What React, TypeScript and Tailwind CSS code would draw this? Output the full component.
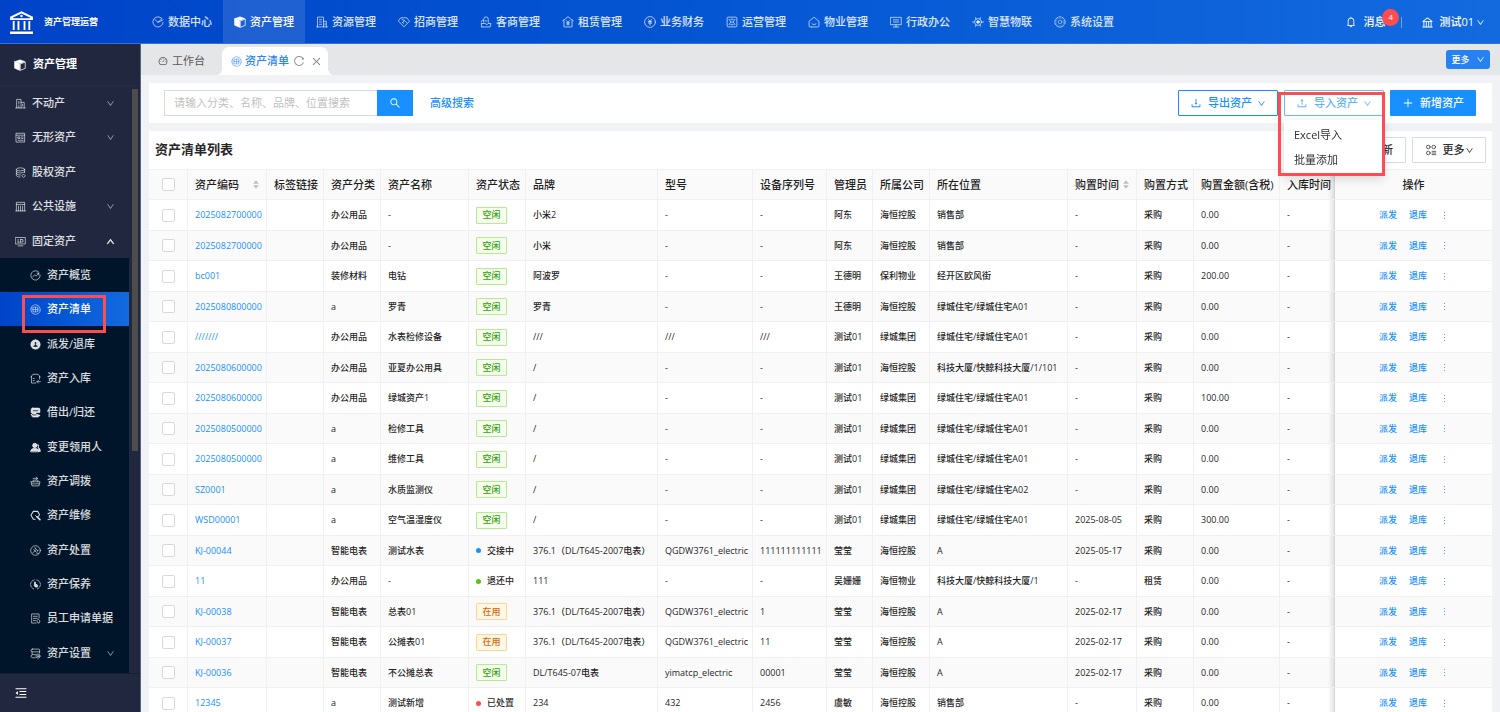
import type { ReactNode } from 'react';
import {
  AiFillCaretDown,
  AiFillCaretUp,
  AiOutlineBank,
  AiOutlineBell,
  AiOutlineClose,
  AiOutlineDashboard,
  AiOutlineDown,
  AiOutlineDownload,
  AiOutlineMenuFold,
  AiOutlinePlus,
  AiOutlineReload,
  AiOutlineSearch,
  AiOutlineUp,
  AiOutlineUpload,
} from 'react-icons/ai';

function Glyph({ children, className = 'size-[11px]' }: { children: ReactNode; className?: string }) {
  return (
    <svg
      viewBox="0 0 16 16"
      className={`${className} shrink-0`}
      fill="none"
      stroke="currentColor"
      strokeWidth="1"
      strokeLinecap="round"
      strokeLinejoin="round"
      aria-hidden="true"
    >
      {children}
    </svg>
  );
}

const cube = (
  <>
    <path d="M1 3.6 7.4 6.4V15L1 12.2Z" fill="currentColor" />
    <path d="M1.4 3.4 8 1l6.6 2.4L8 6Z" fill="currentColor" strokeWidth="0.6" />
    <path d="M8.8 6.6 15 4v8.4L8.8 15Z" />
  </>
);
const listBadge = (
  <>
    <circle cx="8" cy="8" r="7" strokeDasharray="9 1.5" strokeWidth="0.8" />
    <path d="M5 4.6h6v6.8H5zM8 4.6v6.8M5 8h6M3 6v4M13 6v4" strokeWidth="0.7" />
  </>
);
const building = <path d="M2 14.5V1.5h8v13M0.8 14.5h14.4M10 7h3.8v7.5M4.5 5h3M4.5 8h3M4.5 11h3M12 10v2" />;

const topNav: { label: string; icon: ReactNode }[] = [
  {
    label: '数据中心',
    icon: (
      <>
        <path d="M13 3.2A6.8 6.8 0 1 0 14.8 8.6" />
        <path d="M3.5 4.2 8 8.4l6.6-3M13.4 3.4 8 8.4" />
      </>
    ),
  },
  { label: '资产管理', icon: cube },
  { label: '资源管理', icon: building },
  {
    label: '招商管理',
    icon: (
      <>
        <path d="M4.2 2.4h7.6L15.3 7 8 14.4 0.7 7Z" />
        <path d="M6 8.6 8.6 6l3.2 3M5.4 4.6 8.6 6M6 8.6l1.6 1.2" />
      </>
    ),
  },
  {
    label: '客商管理',
    icon: (
      <>
        <path d="M5 8.4V4.2a3 3 0 0 1 6 0v4.2M2.4 14.6h11.2l1-4.6H10.6L9.4 11.6 7 10H1.6l0.8 4.6" />
        <path d="M4.4 5.6H3L1.8 8M6.8 6.6 9.2 6.6" />
      </>
    ),
  },
  {
    label: '租赁管理',
    icon: (
      <>
        <path d="M1 6.4 8 1l7 5.4M2.6 5.6v9h10.8v-9" />
        <path d="M6 6.2 8 8.4l2-2.2M8 8.4v4M6.2 9h3.6M6.2 10.8h3.6" />
      </>
    ),
  },
  {
    label: '业务财务',
    icon: (
      <>
        <circle cx="8" cy="8" r="7.2" />
        <path d="M5.8 4.6 8 7l2.2-2.4M8 7v5M5.8 7.4h4.4M5.8 9.4h4.4" />
      </>
    ),
  },
  {
    label: '运营管理',
    icon: (
      <>
        <path d="M1.5 5V3a1.5 1.5 0 0 1 1.5-1.5h2M11 1.5h2A1.5 1.5 0 0 1 14.5 3v2M14.5 11v2a1.5 1.5 0 0 1-1.5 1.5h-2M5 14.5H3A1.5 1.5 0 0 1 1.5 13v-2M1.5 6v4M14.5 6v4M6 1.5h4M6 14.5h4" />
        <path d="M4 4.4 6.4 8 4 11.6M12 4.4 9.6 8l2.4 3.6M6.4 4.4h3.2M6.4 11.6h3.2M8 7v2" />
      </>
    ),
  },
  { label: '物业管理', icon: <path d="M4.6 14.6H3A1.6 1.6 0 0 1 1.4 13V7L8 1.6 14.6 7v6a1.6 1.6 0 0 1-1.6 1.6H4.6M5.4 10.4c1.6 1.4 3.6 1.4 5.2 0" /> },
  { label: '行政办公', icon: <path d="M1 1.8h14v9.8H1zM8 11.6v3M4.4 14.6h7.2M4.6 5.2h6.8M4.6 8h6.8" /> },
  {
    label: '智慧物联',
    icon: (
      <>
        <circle cx="8" cy="8" r="4.6" />
        <circle cx="8" cy="8" r="1.8" fill="currentColor" />
        <path d="M0.6 8h2.2M13.2 8h2.2M4.6 2l0.8 1.8M11.4 2l-0.8 1.8M4.6 14l0.8-1.8M11.4 14l-0.8-1.8" />
      </>
    ),
  },
  {
    label: '系统设置',
    icon: (
      <>
        <circle cx="8" cy="8" r="6.9" strokeDasharray="2.6 1.7" />
        <circle cx="8" cy="8" r="5.4" strokeWidth="0.4" />
        <circle cx="8" cy="8" r="2.4" strokeWidth="0.7" />
      </>
    ),
  },
];

const sideMenu: { label: string; icon: ReactNode; arrow?: 'up' | 'down' }[] = [
  { label: '不动产', arrow: 'down', icon: <path d="M2.4 14.4V2h6.4v12.4M1 14.4h14M8.8 6.4h4.6v8M5.6 5v3.6M5.6 11v3.4M11 9.4v2" /> },
  { label: '无形资产', arrow: 'down', icon: <path d="M2 1.8h12v12.8H2zM2 4.6h12M4.6 7.2h2.6v2.2H4.6zM9.4 7.2h2.4M9.4 9.4h2.4M4.6 12h7.2" /> },
  {
    label: '股权资产',
    icon: (
      <>
        <ellipse cx="8" cy="3.4" rx="6" ry="2.2" />
        <path d="M2 3.4v9c0 1.2 2.4 2.2 5.4 2.2M14 3.4v5M2 6.4c0 1.2 2.7 2.2 6 2.2s6-1 6-2.2M2 9.4c0 1.2 2.6 2.2 5.6 2.2M12 10.6l-2 2.2 2 2M13 15l2-2.2-2-2" />
      </>
    ),
  },
  { label: '公共设施', arrow: 'down', icon: <path d="M2 14.4V2h12v12.4M1 14.4h14M2 5h12M5 7.4v7M8 7.4v7M11 7.4v7" /> },
  { label: '固定资产', arrow: 'up', icon: <path d="M1 2.2h14v9.4H1zM4.6 14.4h6.8M4.4 5v4M4.4 9h2M8 5v4M8 5.2h3.6v3.6H8" /> },
];

const subMenu: { label: string; icon: ReactNode; arrow?: boolean }[] = [
  {
    label: '资产概览',
    icon: (
      <>
        <path d="M13 3.2A6.8 6.8 0 1 0 14.8 7.4" />
        <path d="M4 9.8 7 7l2 1.8 3.8-4M10.2 4.6h2.6v2.6" />
      </>
    ),
  },
  { label: '资产清单', icon: listBadge },
  {
    label: '派发/退库',
    icon: (
      <path
        d="M8 1a7 7 0 1 0 0 14A7 7 0 0 0 8 1ZM8 3.8l2 2.6H9v2.4l2.4 1.4v1.6H4.6v-1.6L7 8.8V6.4H6Z"
        fill="currentColor"
        fillRule="evenodd"
        strokeWidth="0.6"
      />
    ),
  },
  { label: '资产入库', icon: <path d="M1 6 4.4 1.8h7.2L15 6M2.2 5v9.6h6.4M13.8 5v3.6M4.6 8h1.6M4.6 11h1.6M15 12.6h-4.6M12.2 10.6l-2 2 2 2" /> },
  {
    label: '借出/归还',
    icon: (
      <>
        <path d="M4 1.6h8.4A2 2 0 0 1 14.4 3.6V8H8.6v2.4h-4L1.6 8V4A2.4 2.4 0 0 1 4 1.6ZM1.8 10.6 5 12.6h4.4v-2L14.6 12 12 14.6H4Z" fill="currentColor" />
        <path d="M5 5.4h6" stroke="#001529" />
      </>
    ),
  },
  {
    label: '变更领用人',
    icon: (
      <>
        <circle cx="7" cy="5" r="3.2" fill="currentColor" />
        <path d="M1 13.8c0-3 2.4-4.6 6-4.6s5.6 1.6 5.6 4.6ZM11.2 3.4a2.4 2.4 0 0 1 0 4.4c2.4 0.4 3.8 2 3.8 6h-2.4" fill="currentColor" />
      </>
    ),
  },
  { label: '资产调拨', icon: <path d="M1.4 8.4 3 14.4h10l1.6-6H1.4M4.6 8.4V6M11.4 8.4V6M4.6 3.4h6M9 1.6l2 1.8-2 1.8M2.6 11.4h10.8M6 6h4" /> },
  {
    label: '资产维修',
    icon: (
      <>
        <path d="M7.4 13.4H4.8L1.4 7.6 4.8 2h6.4l2.6 4.6L12.6 9" strokeWidth="1.5" />
        <path d="M10.4 10 14.4 14" strokeWidth="2.4" />
        <path d="M8.4 8.4 10.4 10.4" strokeWidth="1.4" />
      </>
    ),
  },
  {
    label: '资产处置',
    icon: (
      <>
        <circle cx="8" cy="8" r="7" />
        <path d="M4 11.6 8.6 7M7 4.4l4.4 4.2M5.4 6.8l3.4 3.4M8.6 4 7 5.4M12 7.6l-1.8 1.6M9.6 12H12" />
      </>
    ),
  },
  {
    label: '资产保养',
    icon: (
      <>
        <path d="M6 1.4A6.8 6.8 0 0 0 6 14.6M10 1.4a6.8 6.8 0 0 1 0 13.2" strokeDasharray="3 1.6" />
        <path d="M6.4 5v5l1.4 1.8h3V8.6L8 7.4V5Z" fill="currentColor" />
      </>
    ),
  },
  { label: '员工申请单据', icon: <path d="M9 14.6H2.4V1.4h10.8v6M5 4.8h5.6M5 7.8h5.6M5 10.8h3M12.4 9.4l2.2 2.2-1.2 3h-2l-1.2-3Z" /> },
  {
    label: '资产设置',
    arrow: true,
    icon: (
      <>
        <path d="M3.4 1.6h9.2a1.4 1.4 0 0 1 1.4 1.4v2.6H3.4a2 2 0 0 1 0-4ZM14 5.6v2M3 5.6v4h5M3 9.6a2.4 2.4 0 0 0 1 4.6h3.4" />
        <circle cx="11.6" cy="11.8" r="3" />
        <circle cx="11.6" cy="11.8" r="0.8" />
      </>
    ),
  },
];

type Row = {
  code: string;
  kind: string;
  name: string;
  state: string;
  brand: string;
  model: string;
  serial: string;
  admin: string;
  company: string;
  place: string;
  date: string;
  way: string;
  price: string;
};

const r = (
  code: string, kind: string, name: string, state: string, brand: string, model: string, serial: string,
  admin: string, company: string, place: string, date: string, way: string, price: string,
): Row => ({ code, kind, name, state, brand, model, serial, admin, company, place, date, way, price });

const rows: Row[] = [
  r('2025082700000', '办公用品', '-', '空闲', '小米2', '-', '-', '阿东', '海恒控股', '销售部', '-', '采购', '0.00'),
  r('2025082700000', '办公用品', '-', '空闲', '小米', '-', '-', '阿东', '海恒控股', '销售部', '-', '采购', '0.00'),
  r('bc001', '装修材料', '电钻', '空闲', '阿波罗', '-', '-', '王德明', '保利物业', '经开区欧风街', '-', '采购', '200.00'),
  r('2025080800000', 'a', '罗青', '空闲', '罗青', '-', '-', '王德明', '海恒控股', '绿城住宅/绿城住宅A01', '-', '采购', '0.00'),
  r('///////', '办公用品', '水表检修设备', '空闲', '///', '///', '///', '测试01', '绿城集团', '绿城住宅/绿城住宅A01', '-', '采购', '0.00'),
  r('2025080600000', '办公用品', '亚夏办公用具', '空闲', '/', '-', '-', '测试01', '海恒控股', '科技大厦/快鲸科技大厦/1/101', '-', '采购', '0.00'),
  r('2025080600000', '办公用品', '绿城资产1', '空闲', '/', '-', '-', '测试01', '绿城集团', '绿城住宅/绿城住宅A01', '-', '采购', '100.00'),
  r('2025080500000', 'a', '检修工具', '空闲', '/', '-', '-', '测试01', '绿城集团', '绿城住宅/绿城住宅A01', '-', '采购', '0.00'),
  r('2025080500000', 'a', '维修工具', '空闲', '/', '-', '-', '测试01', '绿城集团', '绿城住宅/绿城住宅A01', '-', '采购', '0.00'),
  r('SZ0001', 'a', '水质监测仪', '空闲', '/', '-', '-', '测试01', '绿城集团', '绿城住宅/绿城住宅A02', '-', '采购', '0.00'),
  r('WSD00001', 'a', '空气温湿度仪', '空闲', '/', '-', '-', '测试01', '绿城集团', '绿城住宅/绿城住宅A01', '2025-08-05', '采购', '300.00'),
  r('KJ-00044', '智能电表', '测试水表', '交接中', '376.1（DL/T645-2007电表）', 'QGDW3761_electric', '111111111111', '莹莹', '海恒控股', 'A', '2025-05-17', '采购', '0.00'),
  r('11', '办公用品', '-', '退还中', '111', '-', '-', '吴姗姗', '海恒物业', '科技大厦/快鲸科技大厦/1', '-', '租赁', '0.00'),
  r('KJ-00038', '智能电表', '总表01', '在用', '376.1（DL/T645-2007电表）', 'QGDW3761_electric', '1', '莹莹', '海恒控股', 'A', '2025-02-17', '采购', '0.00'),
  r('KJ-00037', '智能电表', '公摊表01', '在用', '376.1（DL/T645-2007电表）', 'QGDW3761_electric', '11', '莹莹', '海恒控股', 'A', '2025-02-17', '采购', '0.00'),
  r('KJ-00036', '智能电表', '不公摊总表', '空闲', 'DL/T645-07电表', 'yimatcp_electric', '00001', '莹莹', '海恒控股', 'A', '2025-02-17', '采购', '0.00'),
  r('12345', 'a', '测试新增', '已处置', '234', '432', '2456', '虞敏', '海恒控股', '销售部', '-', '采购', '0.00'),
];

const columns: { label: string; width: string; sort?: boolean }[] = [
  { label: '资产编码', width: 'w-[79px]', sort: true },
  { label: '标签链接', width: 'w-[57px]' },
  { label: '资产分类', width: 'w-[57px]' },
  { label: '资产名称', width: 'w-[88px]' },
  { label: '资产状态', width: 'w-[57px]' },
  { label: '品牌', width: 'w-[132px]' },
  { label: '型号', width: 'w-[95px]' },
  { label: '设备序列号', width: 'w-[74px]' },
  { label: '管理员', width: 'w-[46px]' },
  { label: '所属公司', width: 'w-[57px]' },
  { label: '所在位置', width: 'w-[138px]' },
  { label: '购置时间', width: 'w-[69px]', sort: true },
  { label: '购置方式', width: 'w-[57px]' },
  { label: '购置金额(含税)', width: 'w-[86px]' },
  { label: '入库时间', width: 'w-[55px]' },
];

function Sorter() {
  return (
    <span className="flex flex-col text-[8px] text-[#bfbfbf]">
      <AiFillCaretUp className="-mb-[3px]" />
      <AiFillCaretDown />
    </span>
  );
}

const dotColors: Record<string, string> = {
  交接中: 'bg-[#1890ff]',
  退还中: 'bg-[#52c41a]',
  已处置: 'bg-[#ff4d4f]',
};

function State({ value }: { value: string }) {
  if (value in dotColors) {
    return (
      <span className="flex items-center gap-[6px]">
        <span className={`size-[5px] shrink-0 rounded-full ${dotColors[value]}`} />
        {value}
      </span>
    );
  }
  const tone =
    value === '空闲' ? 'border-[#b7eb8f] bg-[#f6ffed] text-[#389e0d]' : 'border-[#ffd591] bg-[#fff7e6] text-[#d46b08]';
  return (
    <span className={`inline-flex h-[17px] w-[31px] items-center justify-center rounded-[1px] border font-medium ${tone}`}>
      {value}
    </span>
  );
}

const fixedCell =
  "sticky right-0 after:absolute after:inset-y-0 after:right-full after:w-[7px] after:bg-linear-to-l after:from-black/12 after:to-transparent after:content-['']";

const box =
  'block size-[13px] appearance-none rounded-[2px] border border-[#d9d9d9] bg-white checked:border-[#1890ff] checked:bg-[#1890ff]';

function AssetTable() {
  return (
    <table className="w-full min-w-[1343px] table-fixed border-separate border-spacing-0 text-left text-[9px] leading-[14px] text-[#1f1f1f]">
      <colgroup>
        <col className="w-[39px]" />
        {columns.map((c) => (
          <col key={c.label} className={c.width} />
        ))}
        <col className="w-[157px]" />
      </colgroup>
      <thead className="text-[11px]">
        <tr className="h-[31px]">
          <th className="border-t border-r border-b border-[#f0f0f0] bg-[#fafafa] p-0 pl-[13px]">
            <input type="checkbox" aria-label="全选" className={box} />
          </th>
          {columns.map((c) => (
            <th
              key={c.label}
              className="overflow-hidden border-t border-r border-b border-[#f0f0f0] bg-[#fafafa] p-0 pl-[7px] font-medium whitespace-nowrap"
            >
              {c.sort ? (
                <span className="flex items-center justify-between pr-[6px]">
                  {c.label}
                  <Sorter />
                </span>
              ) : (
                c.label
              )}
            </th>
          ))}
          <th className={`border-t border-b border-[#f0f0f0] bg-[#fafafa] p-0 text-center font-medium ${fixedCell}`}>操作</th>
        </tr>
      </thead>
      <tbody className="font-medium">
        {rows.map((row, i) => (
          <tr
            key={i}
            className="h-[31px] bg-white even:h-[30px] even:bg-[#fafafa] [&>td]:overflow-hidden [&>td]:border-r [&>td]:border-b [&>td]:border-[#f0f0f0] [&>td]:bg-inherit [&>td]:p-0 [&>td]:pl-[7px] [&>td]:whitespace-nowrap"
          >
            <td>
              <input type="checkbox" aria-label={`选择 ${row.code}`} className={`${box} ml-[6px]`} />
            </td>
            <td className="font-normal text-[#1890ff]">
              <a href="#asset">{row.code}</a>
            </td>
            <td />
            <td>{row.kind}</td>
            <td>{row.name}</td>
            <td>
              <State value={row.state} />
            </td>
            <td>{row.brand}</td>
            <td className="font-normal">{row.model}</td>
            <td className="font-normal">{row.serial}</td>
            <td>{row.admin}</td>
            <td>{row.company}</td>
            <td>{row.place}</td>
            <td className="font-normal">{row.date}</td>
            <td>{row.way}</td>
            <td className="font-normal">{row.price}</td>
            <td className="font-normal">-</td>
            <td className={`overflow-visible! border-r-0! ${fixedCell}`}>
              <span className="flex items-center justify-center gap-[12px] pr-[9px] text-[#1890ff]">
                <button type="button">派发</button>
                <button type="button">退库</button>
                <button type="button" aria-label="更多操作">
                  <svg viewBox="0 0 3 9" className="ml-[4px] h-[9px] w-[3px]" fill="#4da3ff" aria-hidden="true">
                    <rect x="1" y="1" width="1" height="1" />
                    <rect x="1" y="4" width="1" height="1" />
                    <rect x="1" y="7" width="1" height="1" />
                  </svg>
                </button>
              </span>
            </td>
          </tr>
        ))}
      </tbody>
    </table>
  );
}

function Header() {
  return (
    <header className="flex h-[44px] shrink-0 items-stretch border-b border-[#2c74e6] bg-linear-to-r from-[#0043c8] to-[#136adf] pt-px text-[11px] text-white">
      <div className="flex w-[141px] shrink-0 items-center gap-[10px] pl-[9px]">
        <svg viewBox="0 0 24 24" className="size-[25px]" fill="currentColor" aria-hidden="true">
          <path
            d="M12 1.2 23 6.4V9.6H1V6.4ZM12 3.4 4 7.2v0.6h16V7.2ZM12 4.6a1.2 1.2 0 1 1 0 2.4 1.2 1.2 0 0 1 0-2.4Z"
            fillRule="evenodd"
          />
          <path d="M3.6 10.6h1.8v8.6H3.6zM8.2 10.6H10v8.6H8.2zM14 10.6h1.8v8.6H14zM18.6 10.6h1.8v8.6h-1.8zM1 20.6h22v2.4H1z" />
        </svg>
        <h1 className="text-[9px] font-bold">资产管理运营</h1>
      </div>
      <nav className="-mt-px flex min-w-0 flex-1 overflow-hidden">
        {topNav.map((item, i) => (
          <a
            key={item.label}
            href="#nav"
            className={
              i === 1
                ? 'flex w-[82px] shrink-0 items-center justify-center gap-[4px] bg-white/12 pt-px font-medium whitespace-nowrap'
                : 'flex w-[82px] shrink-0 items-center justify-center gap-[4px] pt-px font-medium whitespace-nowrap text-white/85'
            }
          >
            <Glyph className="size-[12px]">{item.icon}</Glyph>
            {item.label}
          </a>
        ))}
      </nav>
      <div className="flex shrink-0 items-center pr-[15px]">
        <a href="#message" className="relative flex items-center gap-[6px] font-medium">
          <AiOutlineBell className="size-[12px]" />
          消息
          <span className="absolute -top-[5px] -right-[14px] flex size-[17px] items-center justify-center rounded-full bg-[#ff4d4f] text-[8px] leading-none font-normal">
            4
          </span>
        </a>
        <span className="ml-[16px] h-[11px] w-px bg-white/40" />
        <button type="button" className="ml-[19px] flex items-center gap-[5px] font-medium">
          <AiOutlineBank className="size-[13px]" />
          测试01
          <AiOutlineDown className="-ml-[3px] size-[9px]" />
        </button>
      </div>
    </header>
  );
}

function Sidebar() {
  return (
    <aside className="flex w-[141px] shrink-0 flex-col border-r border-[#59637f] bg-[#20273f] text-[11px] text-white">
      <div className="flex h-[42px] shrink-0 items-center gap-[7px] border-b border-[#2a2c38] pl-[14px] font-bold">
        <Glyph className="size-[12px]">{cube}</Glyph>
        资产管理
      </div>
      <div className="flex min-h-0 flex-1 overflow-hidden">
        <nav className="flex-1">
          <ul>
            {sideMenu.map((item) => (
              <li key={item.label} className="h-[34px] even:h-[35px]">
                <button type="button" className="flex size-full items-center pr-[14px] pl-[15px] font-medium text-white/85">
                  <Glyph>{item.icon}</Glyph>
                  <span className="ml-[6px] flex-1 text-left">{item.label}</span>
                  {item.arrow === 'down' && <AiOutlineDown className="size-[9px] text-white/60" />}
                  {item.arrow === 'up' && <AiOutlineUp className="size-[9px] stroke-[80]" />}
                </button>
              </li>
            ))}
          </ul>
          <ul className="bg-[#001529] pb-[4px]">
            {subMenu.map((item, i) => (
              <li key={item.label} className="relative h-[34px] nth-[3n]:h-[35px]">
                <a
                  href="#menu"
                  className={
                    i === 1
                      ? 'flex size-full items-center bg-linear-to-r from-[#0043c8] to-[#136adf] pt-px pr-[14px] pl-[30px] font-medium'
                      : 'flex size-full items-center pt-px pr-[14px] pl-[30px] font-medium text-white/85'
                  }
                >
                  <Glyph>{item.icon}</Glyph>
                  <span className="ml-[6px] flex-1 whitespace-nowrap">{item.label}</span>
                  {item.arrow && <AiOutlineDown className="size-[9px] text-white/60" />}
                </a>
                {i === 1 && (
                  <span className="pointer-events-none absolute top-[3px] left-[22px] z-10 h-[38px] w-[84px] border-3 border-[#ff4d4f]" />
                )}
              </li>
            ))}
          </ul>
        </nav>
        <div className="w-[11px] shrink-0 px-[3px] pt-[3px] pr-[2px]">
          <div className="h-[62%] bg-[#4d4d4d]" />
        </div>
      </div>
      <div className="flex h-[39px] shrink-0 items-center border-t border-[#1a1f30] pl-[14px]">
        <button type="button" aria-label="收起菜单">
          <AiOutlineMenuFold className="size-[14px]" />
        </button>
      </div>
    </aside>
  );
}

export default function App() {
  return (
    <div className="flex h-screen flex-col overflow-hidden bg-[#f0f2f5] font-['Open_Sans','Noto_Sans_CJK_SC',sans-serif]">
      <Header />
      <div className="flex min-h-0 flex-1">
        <Sidebar />
        <div className="flex min-w-0 flex-1 flex-col">
          <div className="flex h-[31px] shrink-0 items-end bg-[#e5e6e8] pr-[10px] text-[11px]">
            <a href="#workbench" className="flex h-[28px] items-center gap-[4px] pr-[17px] pl-[17px] text-[#595959]">
              <AiOutlineDashboard className="size-[10px]" />
              工作台
            </a>
            <div className="relative flex h-[28px] items-center rounded-t-[7px] bg-white pr-[6px] pl-[9px] font-medium text-[#2a82f5] before:absolute before:right-full before:bottom-0 before:size-[6px] before:bg-[radial-gradient(circle_at_0_0,transparent_6px,white_6px)] before:content-[''] after:absolute after:bottom-0 after:left-full after:size-[6px] after:bg-[radial-gradient(circle_at_100%_0,transparent_6px,white_6px)] after:content-['']">
              <Glyph>{listBadge}</Glyph>
              <a href="#assets" className="ml-[3px]">资产清单</a>
              <button type="button" aria-label="刷新标签" className="ml-[4px] text-[#8c8c8c]">
                <AiOutlineReload className="size-[12px]" />
              </button>
              <button type="button" aria-label="关闭标签" className="ml-[6px] text-[#7a7a7a]">
                <AiOutlineClose className="size-[11px]" />
              </button>
            </div>
            <button
              type="button"
              className="mb-[6px] ml-auto flex h-[19px] w-[44px] items-center justify-center gap-[6px] rounded-[3px] bg-[#2681f3] text-[9px] font-medium text-white"
            >
              更多
              <AiOutlineDown className="size-[9px]" />
            </button>
          </div>

          <main className="flex min-h-0 flex-1 flex-col gap-[8px] px-[8px] pt-[8px]">
            <section className="flex h-[40px] shrink-0 items-center bg-white pr-[16px] pl-[15px] text-[11px]">
              <form className="flex h-[26px]">
                <input
                  type="text"
                  aria-label="搜索资产"
                  placeholder="请输入分类、名称、品牌、位置搜索"
                  className="w-[213px] border border-r-0 border-[#d9d9d9] px-[9px] placeholder:text-[#bfbfbf]"
                />
                <button type="button" aria-label="搜索" className="flex w-[36px] items-center justify-center bg-[#1890ff] text-white">
                  <AiOutlineSearch className="size-[12px]" />
                </button>
              </form>
              <a href="#advanced" className="ml-[17px] font-medium text-[#1890ff]">高级搜索</a>
              <div className="ml-auto flex h-[26px] gap-[6px]">
                <button
                  type="button"
                  className="flex w-[100px] items-center justify-center rounded-[1px] border border-[#1890ff] font-medium text-[#1890ff]"
                >
                  <AiOutlineDownload className="mr-[6px] size-[12px]" />
                  导出资产
                  <AiOutlineDown className="ml-[5px] size-[9px]" />
                </button>
                <div className="relative flex">
                  <button
                    type="button"
                    aria-expanded="true"
                    className="flex w-[100px] items-center justify-center rounded-[1px] border border-[#69b9ff] font-medium text-[#5cb3ff]"
                  >
                    <AiOutlineUpload className="mr-[6px] size-[12px]" />
                    导入资产
                    <AiOutlineDown className="ml-[5px] size-[9px]" />
                  </button>
                  <ul className="absolute top-[30px] left-0 z-20 w-full bg-white py-[3px] text-[#303030] shadow-[0_3px_10px_rgba(0,0,0,0.14)]">
                    <li>
                      <button type="button" className="flex h-[25px] w-full items-center pl-[10px]">Excel导入</button>
                    </li>
                    <li>
                      <button type="button" className="flex h-[25px] w-full items-center pl-[10px]">批量添加</button>
                    </li>
                  </ul>
                  <span className="pointer-events-none absolute top-[2px] -left-[6px] z-30 h-[84px] w-[107px] border-3 border-[#ff4d4f]" />
                </div>
                <button type="button" className="flex w-[86px] items-center justify-center rounded-[1px] bg-[#1890ff] font-medium text-white">
                  <AiOutlinePlus className="mr-[6px] size-[12px]" />
                  新增资产
                </button>
              </div>
            </section>

            <section className="flex min-h-0 flex-1 flex-col overflow-hidden bg-white">
              <div className="flex h-[38px] shrink-0 items-center justify-between pr-[6px] pl-[6px]">
                <h2 className="text-[13px] font-bold text-[#262626]">资产清单列表</h2>
                <div className="flex h-[26px] gap-[6px] text-[11px] text-[#303030]">
                  <button type="button" className="flex w-[66px] items-center justify-center gap-[6px] rounded-[1px] border border-[#d9d9d9] font-medium">
                    <AiOutlineReload className="size-[12px]" />
                    刷新
                  </button>
                  <button type="button" className="flex w-[74px] items-center justify-center rounded-[1px] border border-[#d9d9d9] font-medium">
                    <Glyph className="mr-[6px] size-[12px]">
                      <circle cx="4.4" cy="4" r="2.4" />
                      <circle cx="11.6" cy="4" r="2.4" />
                      <circle cx="4.4" cy="12" r="2.4" />
                      <path d="M9.4 9.8h5M9.4 12h5M9.4 14.2h5" />
                    </Glyph>
                    更多
                    <AiOutlineDown className="size-[9px]" />
                  </button>
                </div>
              </div>
              <div className="min-h-0 flex-1 overflow-hidden">
                <AssetTable />
              </div>
            </section>
          </main>
        </div>
      </div>
    </div>
  );
}
